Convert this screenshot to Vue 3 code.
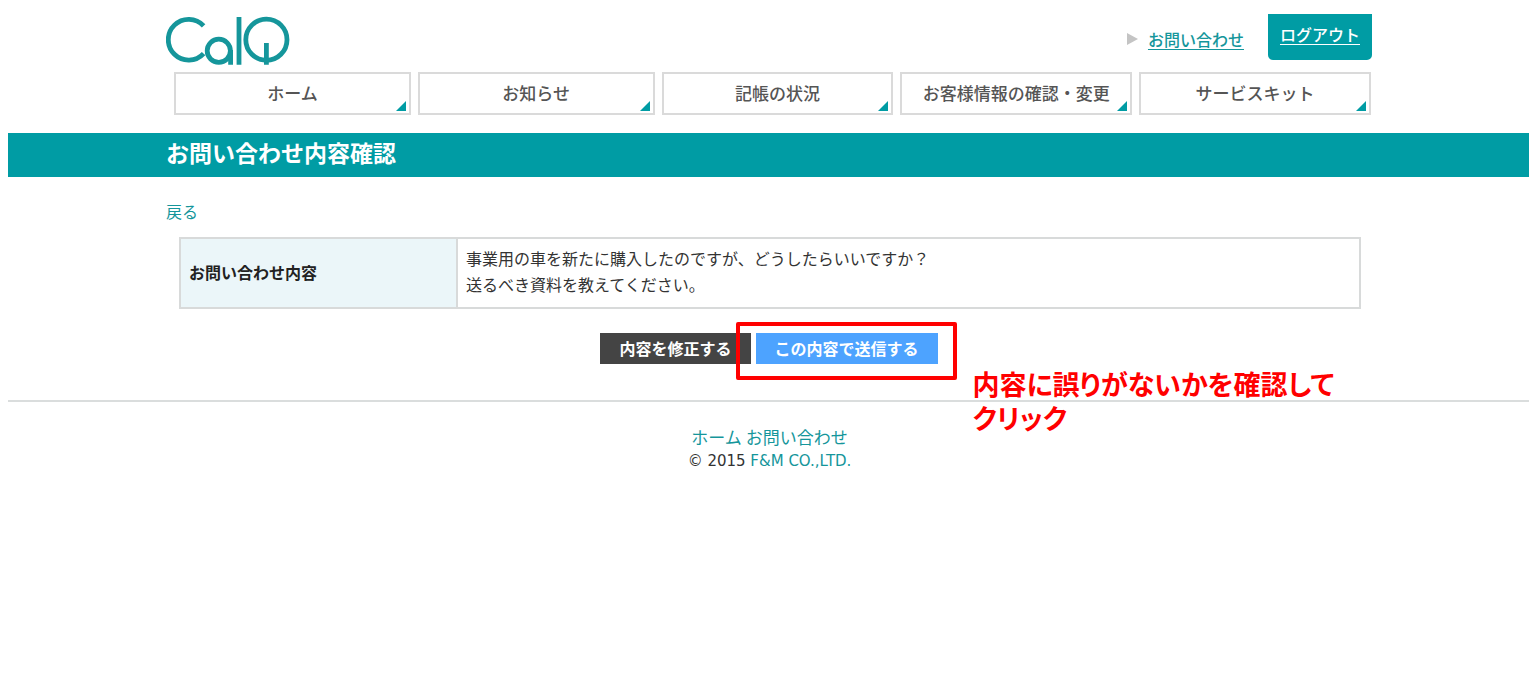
<script setup>
const navItems = ['ホーム', 'お知らせ', '記帳の状況', 'お客様情報の確認・変更', 'サービスキット']
const message = [
  '事業用の車を新たに購入したのですが、どうしたらいいですか？',
  '送るべき資料を教えてください。',
]
</script>

<template>
  <div class="page">
    <header class="container header">
      <a class="logo" href="#" aria-label="CalQ">
        <svg width="124" height="52" viewBox="0 0 124 52" fill="none" stroke="#15969b" stroke-width="4.8">
          <path d="M37.6 11.8A20.4 20.4 0 1 0 37.6 39.6" />
          <circle cx="52.8" cy="36.8" r="11.6" />
          <path d="M64.6 36V50.8M73 3V50.8M100.4 29V50.8" />
          <circle cx="100.4" cy="25.7" r="20.6" />
        </svg>
      </a>
      <div class="tools">
        <a class="contact" href="#">お問い合わせ</a>
        <a class="logout" href="#">ログアウト</a>
      </div>
    </header>

    <nav class="container nav">
      <a v-for="item in navItems" :key="item" class="nav-item" href="#">{{ item }}</a>
    </nav>

    <div class="title-bar">
      <h1 class="container title">お問い合わせ内容確認</h1>
    </div>

    <main class="container main">
      <a class="back" href="#">戻る</a>
      <div class="table-wrap">
        <table class="detail">
          <tbody>
            <tr>
              <th scope="row">お問い合わせ内容</th>
              <td><div v-for="line in message" :key="line">{{ line }}</div></td>
            </tr>
          </tbody>
        </table>
      </div>
      <div class="actions">
        <button class="btn edit" type="button">内容を修正する</button>
        <div class="send-wrap">
          <button class="btn send" type="button">この内容で送信する</button>
          <div class="highlight"></div>
          <p class="callout">内容に誤りがないかを確認して<br />クリック</p>
        </div>
      </div>
    </main>

    <footer class="footer">
      <div><a href="#">ホーム</a> <a href="#">お問い合わせ</a></div>
      <div class="copyright">© 2015 <a href="#">F&amp;M CO.,LTD.</a></div>
    </footer>
  </div>
</template>

<style>
body {
  margin: 0;
  background: #fff;
}
</style>

<style scoped>
.page {
  padding: 14px 11px 0 8px;
  font-family: "Noto Sans CJK JP", sans-serif;
  font-size: 16px;
  line-height: 26px;
  color: #333;
}
.page * {
  box-sizing: border-box;
}
a {
  color: #15969b;
  text-decoration: none;
}
.container {
  max-width: 1207px;
  margin: 0 auto;
  padding-left: 1px;
}
.header {
  display: flex;
  justify-content: space-between;
  align-items: flex-start;
  height: 58px;
}
.logo svg {
  display: block;
}
.tools {
  display: flex;
  gap: 24px;
}
.contact {
  display: flex;
  align-items: center;
  gap: 10px;
  height: 26px;
  margin-top: 12px;
  text-decoration: underline;
  text-underline-offset: 3px;
  font-weight: 500;
}
.contact::before {
  content: "";
  border: 6px solid transparent;
  border-left: 11px solid #c4c4c4;
  border-right: 0;
}
.logout {
  height: 46px;
  padding: 7px 12px;
  background: #009ca4;
  border-radius: 0 0 5px 5px;
  color: #fff;
  font-weight: 500;
  text-decoration: underline;
  text-underline-offset: 3px;
}
.nav {
  display: grid;
  grid-template-columns: 236fr 236fr 231fr 231fr 231fr;
  gap: 7px;
  padding: 0 1px 0 9px;
}
.nav-item {
  position: relative;
  height: 43px;
  padding-top: 6px;
  border: 2px solid #dadada;
  color: #555;
  font-size: 17px;
  font-weight: 500;
  text-align: center;
  white-space: nowrap;
}
.nav-item::after {
  content: "";
  position: absolute;
  right: 3px;
  bottom: 2px;
  border-left: 10px solid transparent;
  border-bottom: 10px solid #009ca4;
}
.title-bar {
  margin-top: 18px;
  height: 44px;
  background: #009ca4;
}
.title {
  color: #fff;
  font-size: 23px;
  font-weight: 700;
  line-height: 38px;
}
.main {
  padding-top: 21px;
}
.back {
  display: block;
}
.table-wrap {
  padding: 13px 11px 0 13px;
}
.detail {
  width: 100%;
  border-collapse: collapse;
}
.detail th,
.detail td {
  border: 2px solid #d8dada;
  text-align: left;
}
.detail th {
  width: 277px;
  padding: 0 8px 2px;
  background: #ebf6f9;
  color: #222;
  font-weight: 700;
}
.detail td {
  padding: 6px 8px 10px;
}
.actions {
  display: flex;
  justify-content: center;
  gap: 5px;
  margin-top: 24px;
}
.btn {
  display: block;
  height: 31px;
  padding: 0 19px;
  border: 0;
  color: #fff;
  font-family: inherit;
  font-size: 16px;
  font-weight: 700;
  line-height: 31px;
  white-space: nowrap;
}
.edit {
  background: #444;
}
.send {
  background: #4da3ff;
}
.send-wrap {
  position: relative;
}
.highlight {
  position: absolute;
  top: -11px;
  right: -19px;
  bottom: -16px;
  left: -20px;
  border: 4px solid #f00;
  border-radius: 2px;
}
.callout {
  position: absolute;
  top: 34px;
  left: 100%;
  margin: 0 0 0 35px;
  color: #f00;
  font-size: 27px;
  font-weight: 700;
  line-height: 34px;
  font-feature-settings: "palt";
  white-space: nowrap;
}
.footer {
  margin-top: 36px;
  padding: 23px 0 0 2px;
  border-top: 2px solid #dadddd;
  font-size: 17px;
  line-height: 24px;
  text-align: center;
}
.copyright {
  font-family: "DejaVu Sans", sans-serif;
  font-size: 15px;
}
</style>
